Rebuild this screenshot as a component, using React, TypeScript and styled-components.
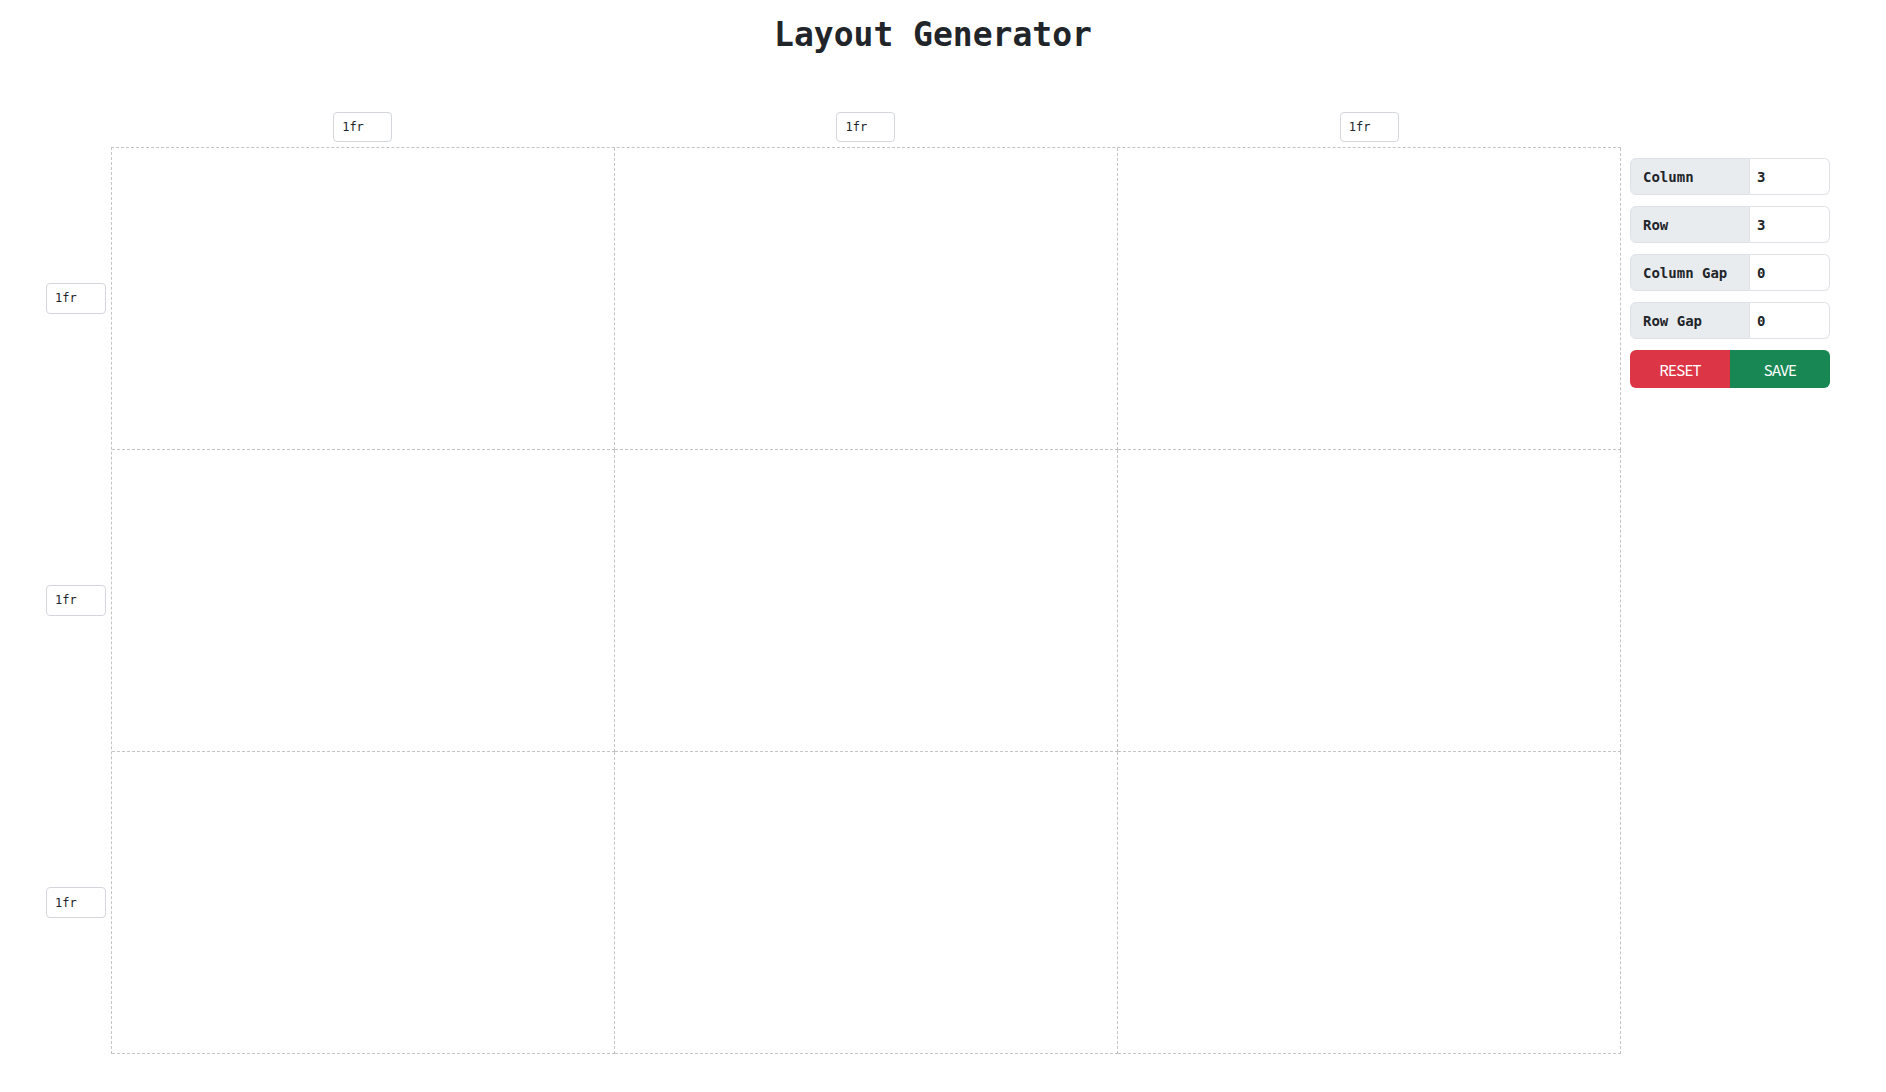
import React, { useState } from "react";
import styled, { createGlobalStyle } from "styled-components";

const GlobalStyle = createGlobalStyle`
  html, body { margin: 0; padding: 0; background: #ffffff; }
  body {
    font-family: "DejaVu Sans Mono", "Liberation Mono", monospace;
    color: #212529;
  }
  * { box-sizing: border-box; }
`;

const Page = styled.div`
  width: 1886px;
  padding-top: 15px;
`;

const Title = styled.h1`
  margin: 0 20px 0 0;
  height: 40px;
  line-height: 40px;
  text-align: center;
  font-size: 33px;
  font-weight: 700;
  color: #212529;
`;

const Workspace = styled.div`
  display: flex;
  align-items: flex-start;
  gap: 9px;
  margin-top: 57px;
  padding-left: 46px;
`;

const Editor = styled.div`
  display: grid;
  grid-template-columns: 60px 1510px;
  grid-template-rows: 30px 907px;
  gap: 5px;
`;

const Corner = styled.div``;

const ColumnHeads = styled.div<{ $count: number }>`
  display: grid;
  grid-template-columns: repeat(${(p) => p.$count}, 1fr);
`;

const RowHeads = styled.div<{ $count: number }>`
  display: grid;
  grid-template-rows: repeat(${(p) => p.$count}, 1fr);
`;

const HeadSlot = styled.div`
  display: flex;
  align-items: center;
  justify-content: center;
`;

const SizeInput = styled.input<{ $tall?: boolean }>`
  width: ${(p) => (p.$tall ? "60px" : "59px")};
  height: ${(p) => (p.$tall ? "31px" : "30px")};
  padding: 0 8px;
  border: 1px solid #d3d7dc;
  border-radius: 4px;
  font-family: "DejaVu Sans Mono", "Liberation Mono", monospace;
  font-size: 12px;
  color: #212529;
  background: #fff;
  outline: none;
`;

const Board = styled.div<{ $cols: number; $rows: number }>`
  display: grid;
  grid-template-columns: repeat(${(p) => p.$cols}, 1fr);
  grid-template-rows: repeat(${(p) => p.$rows}, 1fr);
  border-top: 1px dashed #c4c4c4;
  border-left: 1px dashed #c4c4c4;
`;

const Cell = styled.div`
  border-right: 1px dashed #c4c4c4;
  border-bottom: 1px dashed #c4c4c4;
`;

const Panel = styled.div`
  width: 200px;
  margin-top: 46px;
  display: flex;
  flex-direction: column;
  gap: 11px;
`;

const Field = styled.label`
  display: flex;
  height: 37px;
`;

const FieldLabel = styled.span`
  width: 120px;
  display: flex;
  align-items: center;
  padding-left: 12px;
  background: #e9ecef;
  border: 1px solid #dee2e6;
  border-radius: 6px 0 0 6px;
  font-size: 14px;
  font-weight: 700;
  color: #212529;
`;

const FieldInput = styled.input`
  width: 80px;
  height: 37px;
  padding: 0 7px;
  border: 1px solid #dee2e6;
  border-left: none;
  border-radius: 0 6px 6px 0;
  font-family: "DejaVu Sans Mono", "Liberation Mono", monospace;
  font-size: 14px;
  font-weight: 700;
  color: #212529;
  outline: none;
`;

const ButtonGroup = styled.div`
  display: flex;
  height: 38px;
`;

const ActionButton = styled.button<{ $tone: "danger" | "success" }>`
  flex: 1;
  border: none;
  background: ${(p) => (p.$tone === "danger" ? "#dc3545" : "#198754")};
  color: #ffffff;
  font-family: "Noto Sans CJK KR", "Noto Sans", sans-serif;
  font-size: 15px;
  letter-spacing: -0.7px;
  cursor: pointer;
  border-radius: ${(p) => (p.$tone === "danger" ? "6px 0 0 6px" : "0 6px 6px 0")};
`;

export default function App() {
  const [cols] = useState(3);
  const [rows] = useState(3);
  const cells = Array.from({ length: cols * rows });
  const fields = [
    { label: "Column", value: "3" },
    { label: "Row", value: "3" },
    { label: "Column Gap", value: "0" },
    { label: "Row Gap", value: "0" },
  ];

  return (
    <>
      <GlobalStyle />
      <Page>
        <Title>Layout Generator</Title>
        <Workspace>
          <Editor>
            <Corner />
            <ColumnHeads $count={cols}>
              {Array.from({ length: cols }).map((_, i) => (
                <HeadSlot key={i}>
                  <SizeInput defaultValue="1fr" />
                </HeadSlot>
              ))}
            </ColumnHeads>
            <RowHeads $count={rows}>
              {Array.from({ length: rows }).map((_, i) => (
                <HeadSlot key={i}>
                  <SizeInput $tall defaultValue="1fr" />
                </HeadSlot>
              ))}
            </RowHeads>
            <Board $cols={cols} $rows={rows}>
              {cells.map((_, i) => (
                <Cell key={i} />
              ))}
            </Board>
          </Editor>
          <Panel>
            {fields.map((f) => (
              <Field key={f.label}>
                <FieldLabel>{f.label}</FieldLabel>
                <FieldInput defaultValue={f.value} />
              </Field>
            ))}
            <ButtonGroup>
              <ActionButton $tone="danger">RESET</ActionButton>
              <ActionButton $tone="success">SAVE</ActionButton>
            </ButtonGroup>
          </Panel>
        </Workspace>
      </Page>
    </>
  );
}
